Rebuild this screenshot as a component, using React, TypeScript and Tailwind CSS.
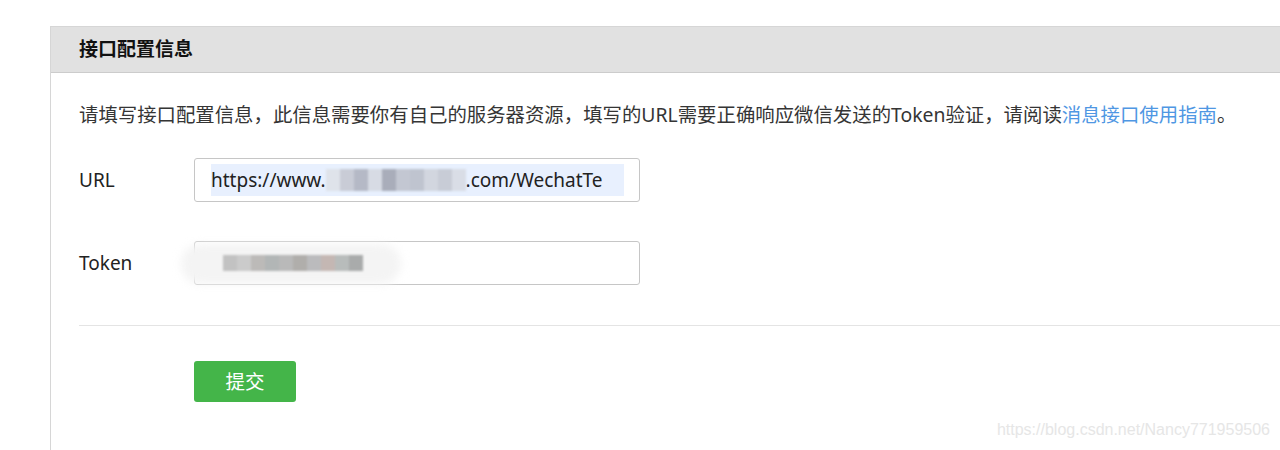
import React from "react"

const cjk = { fontFamily: '"Noto Sans", "Noto Sans CJK SC", sans-serif' }

function Mosaic({ cells, className }: { cells: string[]; className: string }) {
  // pixelated blur standing in for the redacted part of a value
  return (
    <span className={`inline-flex blur-[1px] ${className}`}>
      {cells.map((c, i) => (
        <span key={i} className="h-full w-[14px]" style={{ backgroundColor: c }} />
      ))}
    </span>
  )
}

export default function App() {
  return (
    <div className="relative h-[450px] w-[1280px] overflow-hidden bg-white pl-[50px] pt-[26px]" style={cjk}>
      <div className="h-full border-l border-t border-[#d6d6d6]">
        <div className="flex h-[46px] items-center border-b border-[#cccccc] bg-[#e1e1e1] pl-[28px]">
          <span className="text-[19px] font-bold text-[#111]">接口配置信息</span>
        </div>

        <div className="pl-[28px] pt-[28px]">
          <p className="whitespace-nowrap text-[19.4px] leading-[28px] text-[#353535]">
            请填写接口配置信息，此信息需要你有自己的服务器资源，填写的URL需要正确响应微信发送的Token验证，请阅读
            <span className="text-[#4f97e3]">消息接口使用指南</span>。
          </p>

          <div className="mt-[29px] flex items-center">
            <label className="w-[115px] text-[19px] text-[#222]">URL</label>
            <div className="flex h-[44px] w-[446px] items-center rounded-[3px] border border-[#c6c6c6] pl-[16px]">
              <div className="flex h-[32px] w-[413px] items-center overflow-hidden whitespace-nowrap bg-[#e8f0fe] text-[19px] text-[#222]">
                <span>https://www.</span>
                <Mosaic
                  className="h-[22px] bg-[#dfe3ea]"
                  cells={["#dfe3ea", "#c9ccd6", "#b5b9c6", "#d7dbe4", "#a9adba", "#c3c7d2", "#bfc4cf", "#d2d6df", "#c8ccd6", "#d9dde6"]}
                />
                <span>.com/WechatTe</span>
              </div>
            </div>
          </div>

          <div className="mt-[39px] flex items-center">
            <label className="w-[115px] text-[19px] text-[#222]">Token</label>
            <div className="relative flex h-[44px] w-[446px] items-center rounded-[3px] border border-[#c6c6c6] pl-[28px]">
              <span className="absolute -left-[14px] top-[2px] h-[40px] w-[220px] rounded-full bg-[#f4f4f4] blur-[4px]" />
              <Mosaic
                className="relative h-[16px]"
                cells={["#c2c2c2", "#cbcbcb", "#bcbab8", "#b2b6b6", "#b9b9b9", "#b0aeab", "#bbbbbd", "#c4b7b3", "#b8bcbb", "#a9abab"]}
              />
            </div>
          </div>

          <div className="mt-[40px] h-px bg-[#e4e4e4]" />

          <div className="mt-[35px] pl-[115px]">
            <button className="h-[41px] w-[102px] rounded-[3px] bg-[#44b549] text-[19.5px] text-white">提交</button>
          </div>
        </div>
      </div>

      <div
        className="absolute bottom-[8px] right-[10px] text-[16px] text-[#e6e6e6]"
        style={{ fontFamily: '"Liberation Sans", Arial, sans-serif' }}
      >
        https://blog.csdn.net/Nancy771959506
      </div>
    </div>
  )
}
